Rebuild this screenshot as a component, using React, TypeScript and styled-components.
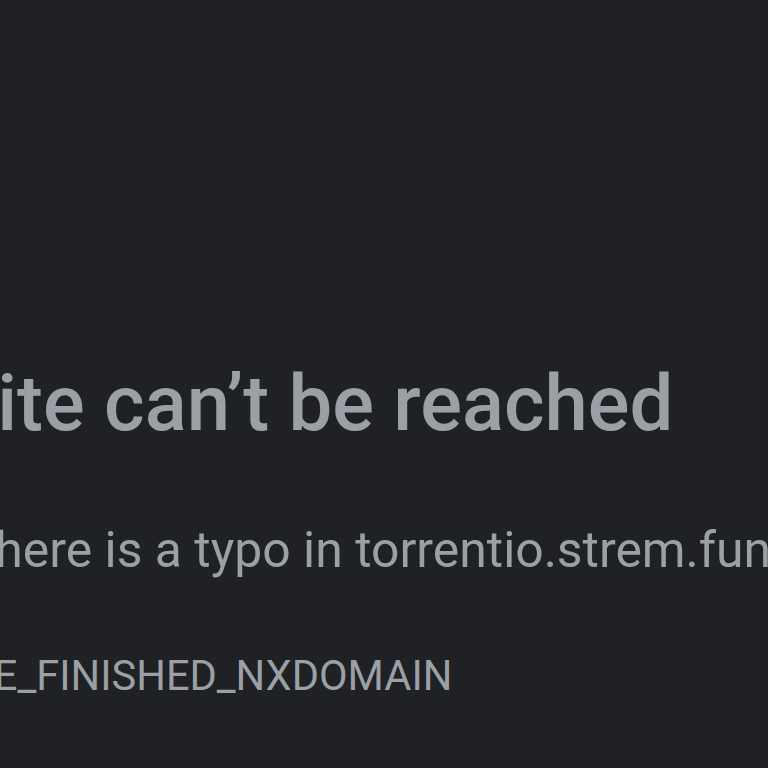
import React from "react";
import styled, { createGlobalStyle } from "styled-components";

const Global = createGlobalStyle`
  html, body {
    margin: 0;
    padding: 0;
    background: #202124;
    overflow: hidden;
  }
  body {
    width: 768px;
    height: 768px;
  }
`;

const Page = styled.main`
  width: 768px;
  height: 768px;
  background: #202124;
  overflow: hidden;
  font-family: Roboto, "Liberation Sans", sans-serif;
  padding-top: 354px;
  box-sizing: border-box;
`;

const Content = styled.div`
  margin-left: -213px;
  white-space: nowrap;
  display: flex;
  flex-direction: column;
`;

const Heading = styled.h1`
  margin: 0;
  font-size: 77.9px;
  line-height: 99px;
  font-weight: 500;
  color: #9aa0a6;
`;

const Message = styled.p`
  margin: 61px 0 0;
  font-size: 49.9px;
  line-height: 72px;
  font-weight: 400;
  color: #9aa0a6;
`;

const ErrorCode = styled.div`
  margin-top: 64px;
  font-size: 41.6px;
  line-height: 52px;
  font-weight: 400;
  color: #9aa0a6;
  text-transform: uppercase;
`;

export default function App() {
  return (
    <>
      <Global />
      <Page>
        <Content>
          <Heading>This site can’t be reached</Heading>
          <Message>Check if there is a typo in torrentio.strem.fun.</Message>
          <ErrorCode>DNS_PROBE_FINISHED_NXDOMAIN</ErrorCode>
        </Content>
      </Page>
    </>
  );
}
